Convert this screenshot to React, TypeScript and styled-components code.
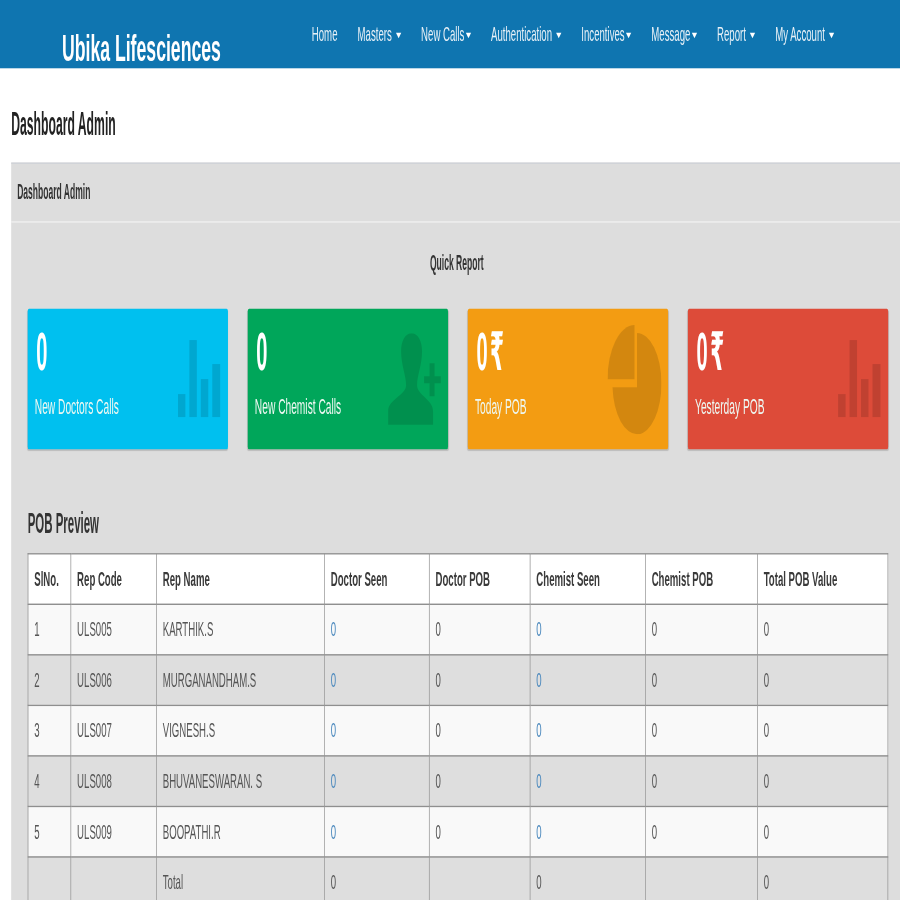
import React from "react";
import styled, { createGlobalStyle } from "styled-components";

const Global = createGlobalStyle`
  html, body { margin: 0; padding: 0; background: #fff; overflow: hidden; }
  body { font-family: "Liberation Sans", Arial, sans-serif; font-size: 14.6px; color: #333; }
  * { box-sizing: border-box; }
`;

const Viewport = styled.div`
  width: 900px;
  height: 900px;
  overflow: hidden;
`;

const Stage = styled.div`
  width: 1366px;
  height: 659px;
  transform: scale(0.6589, 1.3657);
  transform-origin: 0 0;
  filter: blur(0.45px);
`;

const Navbar = styled.nav`
  height: 50px;
  background: #0f75b0;
  display: flex;
  align-items: flex-start;
  padding-left: 94px;
`;

const Brand = styled.a`
  flex: 0 0 364px;
  height: 50px;
  line-height: 72px;
  font-size: 26.8px;
  font-weight: 700;
  color: #fff;
`;

const NavList = styled.ul`
  list-style: none;
  margin: 0;
  padding: 0;
  display: flex;
`;

const NavItem = styled.li`
  padding: 15px 15.25px;
  line-height: 20px;
  color: #e8f1f7;
  white-space: nowrap;
`;

const Caret = styled.span<{ $gap: number }>`
  display: inline-block;
  width: 0;
  height: 0;
  margin-left: ${(p) => p.$gap}px;
  vertical-align: middle;
  border-top: 4px solid #fff;
  border-left: 4px solid transparent;
  border-right: 4px solid transparent;
`;

const Squeezed = styled.span<{ $x: number; $origin?: string }>`
  display: inline-block;
  transform: scaleX(${(p) => p.$x});
  transform-origin: ${(p) => p.$origin ?? "left"} center;
`;

const PageTitle = styled.h3`
  margin: 0;
  padding: 26.5px 0 0 16.5px;
  height: 69px;
  font-family: "Liberation Sans Narrow", "Liberation Sans", sans-serif;
  font-size: 25px;
  line-height: 26px;
  font-weight: 700;
  color: #222;
`;

const Panel = styled.section`
  margin-left: 17px;
  background: #ddd;
  border-top: 1px solid #cfd2d8;
  min-height: 600px;
`;

const PanelHead = styled.div`
  height: 43px;
  padding: 0 9px;
  line-height: 42px;
  font-family: "Liberation Sans Narrow", "Liberation Sans", sans-serif;
  font-size: 16px;
  font-weight: 700;
  color: #333;
  border-bottom: 1px solid #f0f0f0;
`;

const QuickTitle = styled.h4`
  margin: 0;
  height: 63.3px;
  padding: 19px 0 0 4px;
  text-align: center;
  line-height: 22px;
  font-family: "Liberation Sans Narrow", "Liberation Sans", sans-serif;
  font-size: 16px;
  font-weight: 700;
  color: #333;
`;

const CardRow = styled.div`
  display: grid;
  grid-template-columns: repeat(4, 304px);
  column-gap: 30px;
  padding-left: 24.8px;
`;

const Card = styled.div<{ $bg: string }>`
  position: relative;
  height: 102.5px;
  background: ${(p) => p.$bg};
  border-radius: 2px;
  box-shadow: 0 1px 1px rgba(0, 0, 0, 0.15);
  padding: 10px 11px;
  color: #fff;
`;

const CardValue = styled.div`
  font-size: 39px;
  line-height: 44px;
  height: 44px;
  font-family: "Liberation Sans Narrow", "Liberation Sans", "DejaVu Sans", sans-serif;
  font-weight: 700;
  letter-spacing: 5px;
  margin-left: 2px;
`;

const CardLabel = styled.div`
  margin-top: 7px;
  font-size: 15.5px;
  line-height: 22px;
  color: #eef8f2;
`;

const CardIcon = styled.svg<{ $w: number; $h: number; $top: number; $right: number }>`
  position: absolute;
  top: ${(p) => p.$top}px;
  right: ${(p) => p.$right}px;
  width: ${(p) => p.$w}px;
  height: ${(p) => p.$h}px;
  fill: rgba(0, 0, 0, 0.13);
`;

const SectionTitle = styled.h3`
  margin: 0;
  height: 76px;
  padding: 41px 0 0 25px;
  font-family: "Liberation Sans Narrow", "Liberation Sans", sans-serif;
  font-size: 22px;
  line-height: 26px;
  font-weight: 700;
  color: #333;
`;

const TableWrap = styled.div`
  padding-left: 25px;
`;

const Table = styled.table`
  width: 1305px;
  table-layout: fixed;
  border-collapse: collapse;
`;

const Th = styled.th`
  height: 37px;
  padding: 8px 8px 8px 9px;
  text-align: left;
  background: #fff;
  border: 1px solid #8f8f8f;
  font-weight: 700;
  line-height: 20px;
  color: #3a3a3a;
`;

const Td = styled.td`
  height: 37px;
  padding: 8px 8px 8px 9px;
  border: 1px solid #8f8f8f;
  line-height: 20px;
  color: #555;
`;

const Tr = styled.tr<{ $bg: string }>`
  background: ${(p) => p.$bg};
`;

const Seen = styled.a`
  color: #4a88bd;
`;

const Bars = () => (
  <CardIcon $w={65} $h={56.4} $top={23} $right={10.5} viewBox="0 0 43 77" preserveAspectRatio="none">
    <rect x="0" y="54" width="7.5" height="23" />
    <rect x="11.5" y="0" width="7.5" height="77" />
    <rect x="23" y="39" width="7.5" height="38" />
    <rect x="34.5" y="24" width="8" height="53" />
  </CardIcon>
);

const PersonAdd = () => (
  <CardIcon $w={80.4} $h={67.4} $top={17.6} $right={10.5} viewBox="0 0 53 92" preserveAspectRatio="none">
    <path d="M23.5 0C30 0 34 8 34 18C34 32 29 42 29 52C29 62 45 66 45 78L45 92L0 92L0 78C0 66 18 62 18 52C18 42 13 32 13 18C13 8 17 0 23.5 0Z" />
    <path d="M41.5 30H46.5V43H53V50H46.5V63H41.5V50H36V43H41.5Z" />
  </CardIcon>
);

const Pie = () => (
  <CardIcon $w={82} $h={80} $top={11.7} $right={10} viewBox="0 0 54 109" preserveAspectRatio="none">
    <path d="M27 0A27 54 0 0 0 0 54L27 54Z" />
    <path d="M29.5 8A24.5 50.5 0 1 1 5 62L29.5 62Z" />
  </CardIcon>
);

const cards = [
  { bg: "#00c0ef", value: "0", label: "New Doctors Calls", icon: <Bars /> },
  { bg: "#00a65a", value: "0", label: "New Chemist Calls", icon: <PersonAdd /> },
  { bg: "#f39c12", value: "0₹", label: "Today POB", icon: <Pie /> },
  { bg: "#dd4b39", value: "0₹", label: "Yesterday POB", icon: <Bars /> },
];

const nav: { label: string; gap?: number }[] = [
  { label: "Home" },
  { label: "Masters", gap: 6 },
  { label: "New Calls", gap: 2 },
  { label: "Authentication", gap: 6 },
  { label: "Incentives", gap: 2 },
  { label: "Message", gap: 2 },
  { label: "Report", gap: 6 },
  { label: "My Account", gap: 6 },
];

const widths = [65, 130, 255, 159, 153, 175, 170, 198];
const heads = ["SlNo.", "Rep Code", "Rep Name", "Doctor Seen", "Doctor POB", "Chemist Seen", "Chemist POB", "Total POB Value"];
const rows = [
  ["1", "ULS005", "KARTHIK.S"],
  ["2", "ULS006", "MURGANANDHAM.S"],
  ["3", "ULS007", "VIGNESH.S"],
  ["4", "ULS008", "BHUVANESWARAN. S"],
  ["5", "ULS009", "BOOPATHI.R"],
];

export default function App() {
  return (
    <Viewport>
      <Global />
      <Stage>
        <Navbar>
          <Brand>Ubika Lifesciences</Brand>
          <NavList>
            {nav.map((n) => (
              <NavItem key={n.label}>
                {n.label}
                {n.gap !== undefined && <Caret $gap={n.gap} />}
              </NavItem>
            ))}
          </NavList>
        </Navbar>
        <PageTitle>
          <Squeezed $x={0.74}>Dashboard Admin</Squeezed>
        </PageTitle>
        <Panel>
          <PanelHead>
            <Squeezed $x={0.81}>Dashboard Admin</Squeezed>
          </PanelHead>
          <QuickTitle>
            <Squeezed $x={0.81} $origin="center">Quick Report</Squeezed>
          </QuickTitle>
          <CardRow>
            {cards.map((c) => (
              <Card key={c.label} $bg={c.bg}>
                <CardValue>
                  <Squeezed $x={0.78}>{c.value}</Squeezed>
                </CardValue>
                <CardLabel>{c.label}</CardLabel>
                {c.icon}
              </Card>
            ))}
          </CardRow>
          <SectionTitle>
            <Squeezed $x={0.79}>POB Preview</Squeezed>
          </SectionTitle>
          <TableWrap>
            <Table>
              <colgroup>
                {widths.map((w, i) => (
                  <col key={i} width={w} />
                ))}
              </colgroup>
              <thead>
                <tr>
                  {heads.map((h) => (
                    <Th key={h}>{h}</Th>
                  ))}
                </tr>
              </thead>
              <tbody>
                {rows.map((r, i) => (
                  <Tr key={r[0]} $bg={i % 2 === 0 ? "#f9f9f9" : "#dedede"}>
                    <Td>{r[0]}</Td>
                    <Td>{r[1]}</Td>
                    <Td>{r[2]}</Td>
                    <Td><Seen>0</Seen></Td>
                    <Td>0</Td>
                    <Td><Seen>0</Seen></Td>
                    <Td>0</Td>
                    <Td>0</Td>
                  </Tr>
                ))}
                <Tr $bg="#dedede">
                  <Td />
                  <Td />
                  <Td>Total</Td>
                  <Td>0</Td>
                  <Td />
                  <Td>0</Td>
                  <Td />
                  <Td>0</Td>
                </Tr>
              </tbody>
            </Table>
          </TableWrap>
        </Panel>
      </Stage>
    </Viewport>
  );
}
